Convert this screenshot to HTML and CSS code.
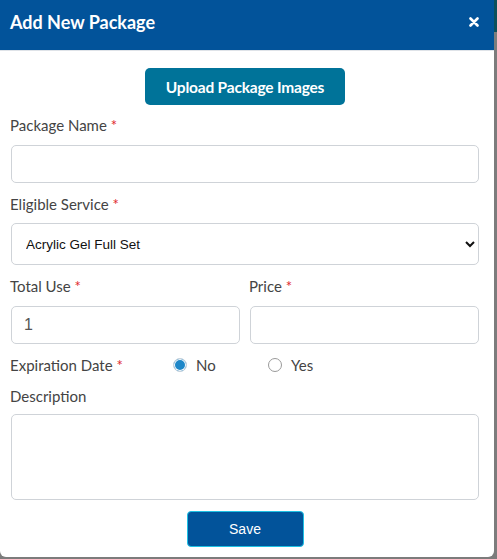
FILE: index.html
```html
<!DOCTYPE html>
<html>
<head>
<meta charset="utf-8">
<link rel="stylesheet" href="styles.css">
</head>
<body>
<div class="backdrop-strip"></div>
<div class="modal">
  <div class="modal-header">
    <h1 class="modal-title">Add New Package</h1>
    <button class="close-btn" aria-label="Close">
      <svg width="10" height="10" viewBox="0 0 10 10"><path d="M1.5 1.5 L8.5 8.5 M8.5 1.5 L1.5 8.5" stroke="#fff" stroke-width="2.6" stroke-linecap="round"/></svg>
    </button>
  </div>
  <div class="modal-body">
    <div class="upload-row">
      <button class="btn-upload">Upload Package Images</button>
    </div>
    <div class="group">
      <label class="lbl">Package Name <span class="req">*</span></label>
      <input class="ctrl" type="text">
    </div>
    <div class="group">
      <label class="lbl">Eligible Service <span class="req">*</span></label>
      <select class="ctrl sel">
        <option>Acrylic Gel Full Set</option>
      </select>
    </div>
    <div class="group two-col">
      <div class="col">
        <label class="lbl">Total Use <span class="req">*</span></label>
        <input class="ctrl num" type="text" value="1">
      </div>
      <div class="col">
        <label class="lbl">Price <span class="req">*</span></label>
        <input class="ctrl" type="text">
      </div>
    </div>
    <div class="exp-row">
      <span class="lbl exp-lbl">Expiration Date <span class="req">*</span></span>
      <label class="radio-opt opt-no"><span class="radio checked"></span><span class="radio-text">No</span></label>
      <label class="radio-opt"><span class="radio"></span><span class="radio-text">Yes</span></label>
    </div>
    <div class="group desc">
      <label class="lbl">Description</label>
      <textarea class="ctrl area"></textarea>
    </div>
    <div class="save-row">
      <button class="btn-save">Save</button>
    </div>
  </div>
</div>
</body>
</html>
```
FILE: styles.css
```css
html, body {
  margin: 0;
  padding: 0;
}
body {
  background: #7c7c7c;
  width: 497px;
  height: 559px;
  overflow: hidden;
  position: relative;
  font-family: "Lato", "Liberation Sans", sans-serif;
}
.backdrop-strip {
  position: absolute;
  top: 0;
  right: 0;
  width: 3px;
  height: 32px;
  background: #0d4f5c;
}
.modal {
  position: relative;
  width: 494px;
  height: 557px;
  background: #fff;
  border-radius: 0 0 6px 6px;
  box-sizing: border-box;
}
.modal-header {
  height: 50px;
  background: #02539a;
  border-bottom: 1px solid #dfe3e8;
  display: flex;
  align-items: center;
  justify-content: space-between;
  padding: 0 14px 0 10px;
}
.modal-title {
  margin: 0;
  color: #fff;
  font-size: 18px;
  font-weight: 700;
  letter-spacing: 0;
  position: relative;
  top: -3px;
}
.close-btn {
  background: none;
  border: 0;
  padding: 0;
  width: 12px;
  height: 12px;
  display: flex;
  align-items: center;
  justify-content: center;
  position: relative;
  top: -3px;
}
.modal-body {
  padding: 17px 15px 0 11px;
}
.upload-row {
  display: flex;
  justify-content: center;
}
.btn-upload {
  width: 200px;
  height: 37px;
  background: #007399;
  color: #fff;
  border: 0;
  border-radius: 5px;
  font-family: "Lato", "Liberation Sans", sans-serif;
  font-weight: 700;
  font-size: 15.5px;
  letter-spacing: -0.2px;
}
.group {
  margin-top: 10px;
}
.lbl {
  display: block;
  font-size: 15px;
  line-height: 20px;
  color: #444;
  margin-left: -1px;
  margin-bottom: 10px;
}
.req {
  color: #e0262b;
}
.ctrl {
  display: block;
  width: 468px;
  height: 38px;
  box-sizing: border-box;
  border: 1px solid #cfd3d8;
  border-radius: 5px;
  background: #fff;
  padding: 0 12px;
  font-family: "Liberation Sans", Arial, sans-serif;
  font-size: 15px;
  color: #555;
  margin: 0;
  outline: none;
}
.group + .group, .group.two-col, .group.desc {
  margin-top: 11px;
}
.sel {
  height: 42px;
  font-size: 13.5px;
  color: #111;
  padding: 0 8px 0 10px;
  margin-top: -1px;
}
.two-col {
  display: flex;
  gap: 10px;
}
.col .ctrl {
  width: 229px;
}
.num {
  color: #555;
  font-size: 16px;
}
.exp-row {
  display: flex;
  align-items: center;
  height: 20px;
  margin-top: 11px;
}
.exp-lbl {
  display: inline;
  margin-bottom: 0;
  width: 163px;
}
.radio-opt {
  display: flex;
  align-items: center;
  font-size: 15px;
  color: #444;
}
.opt-no {
  width: 95px;
}
.radio {
  width: 14px;
  height: 14px;
  border-radius: 50%;
  border: 1px solid #9a9a9a;
  box-sizing: border-box;
  margin-right: 9px;
  background: #fff;
}
.radio.checked {
  background: #1e87c8;
  border: 1px solid #c9d3dc;
  box-shadow: inset 0 0 0 1px #fff;
}
.radio-text {
  line-height: 20px;
}
.area {
  height: 86px;
  resize: none;
  margin-top: -1px;
}
.desc .lbl {
  margin-bottom: 9px;
}
.save-row {
  display: flex;
  justify-content: center;
  margin-top: 11px;
}
.btn-save {
  width: 117px;
  height: 36px;
  background: #02539a;
  color: #fff;
  border: 1px solid #1ec1e4;
  border-radius: 4px;
  font-family: "Liberation Sans", Arial, sans-serif;
  font-size: 14px;
}
```
